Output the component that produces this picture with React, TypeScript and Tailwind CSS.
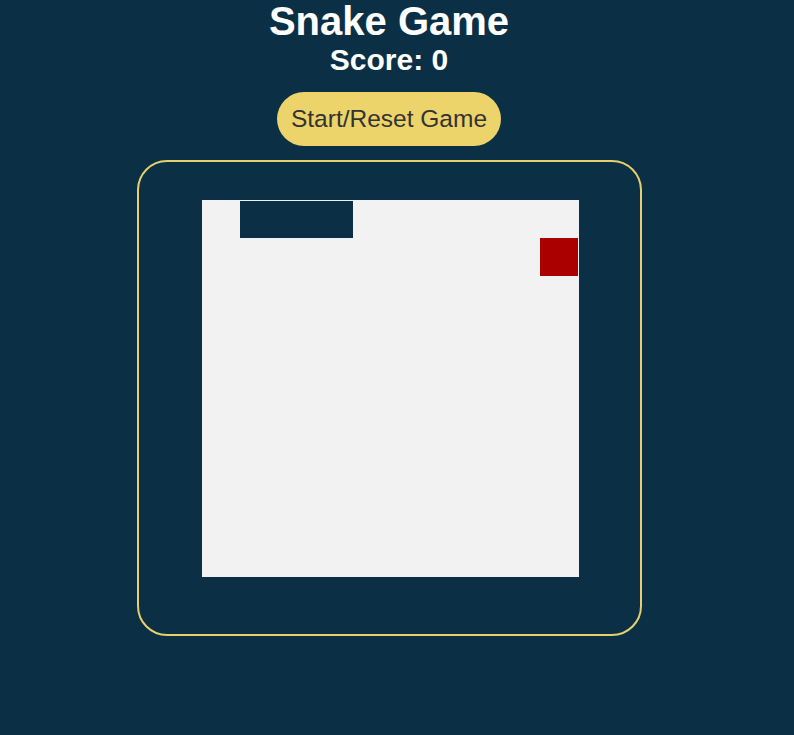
import React from "react";

export default function App() {
  return (
    <div
      className="min-h-[735px] w-full bg-[#0b3045]"
      style={{ fontFamily: '"Liberation Sans", Arial, sans-serif' }}
    >
      <div className="w-[778px] flex flex-col items-center">
        <h1 className="text-[40px] leading-[43px] font-bold text-white m-0">Snake Game</h1>
        <h2 className="text-[30px] leading-[34px] font-bold text-white m-0">Score: 0</h2>
        <button className="mt-[15px] h-[54px] px-[14px] rounded-full bg-[#ecd36a] text-[#333333] text-[24.5px] leading-[28px]">
          Start/Reset Game
        </button>
        <div className="mt-[14px] w-[505px] h-[476px] border-2 border-[#e6cf6d] rounded-[30px] pl-[63px] pt-[38px]">
          <div className="relative w-[377px] h-[377px] bg-[#f2f2f2]">
            <div className="absolute left-[38px] top-[1px] w-[113px] h-[37px] bg-[#0b3045]" />
            <div className="absolute left-[338px] top-[38px] w-[38px] h-[38px] bg-[#aa0000]" />
          </div>
        </div>
      </div>
    </div>
  );
}
